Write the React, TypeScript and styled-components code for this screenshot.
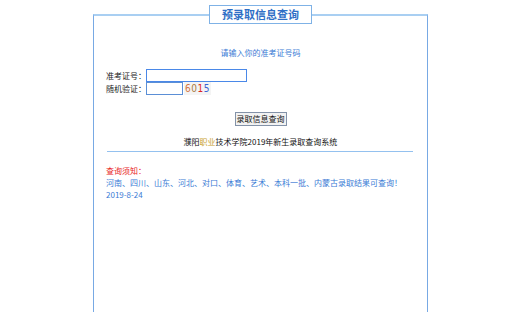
import * as React from 'react';
import styled, { createGlobalStyle } from 'styled-components';

const GlobalStyle = createGlobalStyle`
  html, body {
    margin: 0;
    padding: 0;
    background: #fff;
  }
  body {
    font-family: "Noto Sans CJK SC", "Noto Sans", sans-serif;
  }
`;

const Page = styled.div`
  width: 528px;
  height: 312px;
  overflow: hidden;
  padding-top: 5px;
  box-sizing: border-box;
`;

const Frame = styled.fieldset`
  width: 335px;
  height: 400px;
  margin: 0 0 0 93px;
  padding: 0 12px 0 12px;
  box-sizing: border-box;
  border-style: solid;
  border-color: #78a9e4;
  border-width: 2px 1px 0 1px;
  border-top-color: #a9cff2;
  min-inline-size: auto;
`;

const Legend = styled.legend`
  margin: 0 auto;
  padding: 0 12px;
  height: 19px;
  box-sizing: border-box;
  border: 1px solid #7fb2e6;
  font-size: 11px;
  line-height: 17px;
  font-weight: bold;
  color: #2f6fc6;
`;

const Prompt = styled.div`
  margin-top: 23px;
  text-align: center;
  font-size: 8px;
  line-height: 12px;
  color: #3a7bd5;
`;

const Form = styled.div`
  margin-top: 10px;
  display: flex;
  flex-direction: column;
`;

const Row = styled.div`
  display: flex;
  align-items: center;
  height: 13px;
`;

const Label = styled.span`
  width: 40px;
  font-size: 8px;
  line-height: 12px;
  color: #222;
  white-space: nowrap;
`;

const Field = styled.input<{ $w: number }>`
  width: ${p => p.$w}px;
  height: 13px;
  box-sizing: border-box;
  margin: 0;
  padding: 0 1px;
  border: 1px solid #5b8fd6;
  font-size: 8px;
  outline: none;
  &:focus {
    border-color: #4a88e8;
  }
`;

const Captcha = styled.span`
  margin-left: 1px;
  width: 27px;
  height: 13px;
  display: flex;
  align-items: center;
  justify-content: center;
  background: #f4f4f4;
  font-family: "DejaVu Sans Condensed", "DejaVu Sans", sans-serif;
  font-size: 10px;
  letter-spacing: 0.5px;
`;

const Digit = styled.span<{ $c: string }>`
  color: ${p => p.$c};
`;

const ButtonRow = styled.div`
  margin-top: 17px;
  display: flex;
  justify-content: center;
`;

const Button = styled.button`
  width: 52px;
  height: 14px;
  padding: 0;
  box-sizing: border-box;
  border: 1px solid #8392a8;
  background: #f2f2f2;
  font-family: "Noto Sans CJK SC", sans-serif;
  font-size: 8px;
  line-height: 12px;
  color: #111;
`;

const SystemTitle = styled.div`
  margin-top: 10px;
  text-align: center;
  font-size: 8px;
  line-height: 12px;
  color: #111;
`;

const Gold = styled.span`
  color: #c9a22a;
`;

const Rule = styled.div`
  margin: 3px 0 0 1px;
  width: 306px;
  height: 1px;
  background: #94c1ef;
`;

const Notice = styled.div`
  margin-top: 13px;
  font-size: 8px;
  line-height: 12px;
`;

const NoticeLine = styled.div<{ $red?: boolean }>`
  color: ${p => (p.$red ? '#e8231c' : '#3a7bd5')};
  white-space: nowrap;
`;

const digits: [string, string][] = [
  ['6', '#d4743e'],
  ['0', '#a97a3e'],
  ['1', '#e02424'],
  ['5', '#3b64d4'],
];

const App = () => {
  return (
    <Page>
      <GlobalStyle />
      <Frame>
        <Legend>预录取信息查询</Legend>
        <Prompt>请输入你的准考证号码</Prompt>
        <Form>
          <Row>
            <Label>准考证号：</Label>
            <Field $w={101} autoFocus />
          </Row>
          <Row>
            <Label>随机验证：</Label>
            <Field $w={37} />
            <Captcha>
              {digits.map(([d, c], i) => (
                <Digit key={i} $c={c}>{d}</Digit>
              ))}
            </Captcha>
          </Row>
        </Form>
        <ButtonRow>
          <Button>录取信息查询</Button>
        </ButtonRow>
        <SystemTitle>
          濮阳<Gold>职业</Gold>技术学院2019年新生录取查询系统
        </SystemTitle>
        <Rule />
        <Notice>
          <NoticeLine $red>查询须知：</NoticeLine>
          <NoticeLine>河南、四川、山东、河北、对口、体育、艺术、本科一批、内蒙古录取结果可查询！</NoticeLine>
          <NoticeLine>2019-8-24</NoticeLine>
        </Notice>
      </Frame>
    </Page>
  );
};

export default App;
